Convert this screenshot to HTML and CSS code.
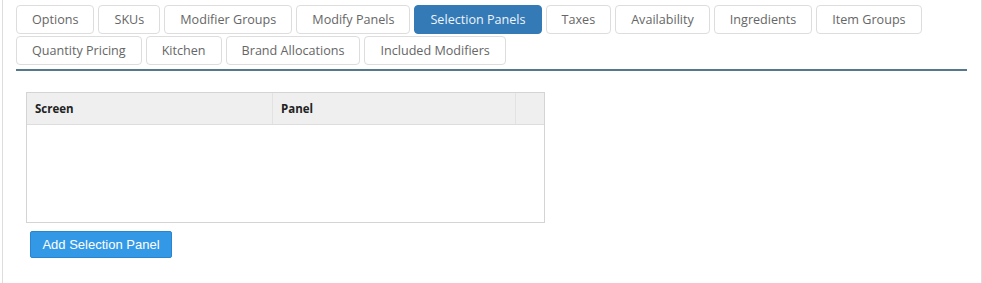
FILE: index.html
```html
<!DOCTYPE HTML>
<html>
<head>
<meta charset="utf-8" />
<title>Selection Panels</title>
<link rel="stylesheet" href="styles.css">
</head>
<body>
<div class="page">
	<ul class="tabs">
		<li><a href="#">Options</a></li>
		<li><a href="#">SKUs</a></li>
		<li><a href="#">Modifier Groups</a></li>
		<li><a href="#">Modify Panels</a></li>
		<li class="active"><a href="#">Selection Panels</a></li>
		<li><a href="#">Taxes</a></li>
		<li><a href="#">Availability</a></li>
		<li><a href="#">Ingredients</a></li>
		<li><a href="#">Item Groups</a></li>
		<li><a href="#">Quantity Pricing</a></li>
		<li><a href="#">Kitchen</a></li>
		<li><a href="#">Brand Allocations</a></li>
		<li><a href="#">Included Modifiers</a></li>
	</ul>
	<div class="panel">
		<div class="grid">
			<div class="grid-head">
				<div class="col col-screen">Screen</div>
				<div class="col col-panel">Panel</div>
				<div class="col col-pad"></div>
			</div>
			<div class="grid-body"></div>
		</div>
		<button class="btn-add">Add Selection Panel</button>
	</div>
</div>
</body>
</html>
```

FILE: styles.css
```css
html,body{margin:0;padding:0;background:#fff;}
body{font-family:"Open Sans","Segoe UI",sans-serif;}
.page{
	margin-left:2px;
	width:980px;
	height:283px;
	border-left:1px solid #ddd;
	border-right:1px solid #ddd;
	box-sizing:border-box;
	padding:5px 14px 0 13px;
}
.tabs{
	list-style:none;
	margin:0;
	padding:0 0 4px 0;
	display:flex;
	flex-wrap:wrap;
	gap:2px 4px;
	border-bottom:2px solid #56788d;
}
.tabs li a{
	display:block;
	height:27px;
	line-height:27px;
	padding:0 15px;
	border:1px solid #ddd;
	border-radius:4px;
	color:#666;
	font-size:12.6px;
	text-decoration:none;
	background:#fff;
}
.tabs li.active a{
	background:#337ab7;
	border-color:#337ab7;
	color:#eef4fa;
}
.panel{padding:21px 0 0 10px;}
.grid{
	width:519px;
	height:131px;
	border:1px solid #d4d4d4;
	box-sizing:border-box;
}
.grid-head{
	display:flex;
	height:31px;
	background:#efefef;
	border-bottom:1px solid #ddd;
}
.col{
	font-family:"Open Sans","Segoe UI",sans-serif;
	font-weight:bold;
	font-size:11.5px;
	color:#222;
	line-height:31px;
	padding-left:8px;
	box-sizing:border-box;
}
.col-screen{width:246px;border-right:1px solid #e2e2e2;}
.col-panel{width:243px;border-right:1px solid #e2e2e2;}
.col-pad{flex:1;}
.btn-add{
	display:block;
	margin:8px 0 0 4px;
	width:142px;
	height:27px;
	background:#3399e6;
	border:1px solid #2a86cc;
	border-radius:2px;
	color:#fff;
	font-family:"Liberation Sans",Arial,sans-serif;
	font-size:13px;
	padding:0;
}
```
